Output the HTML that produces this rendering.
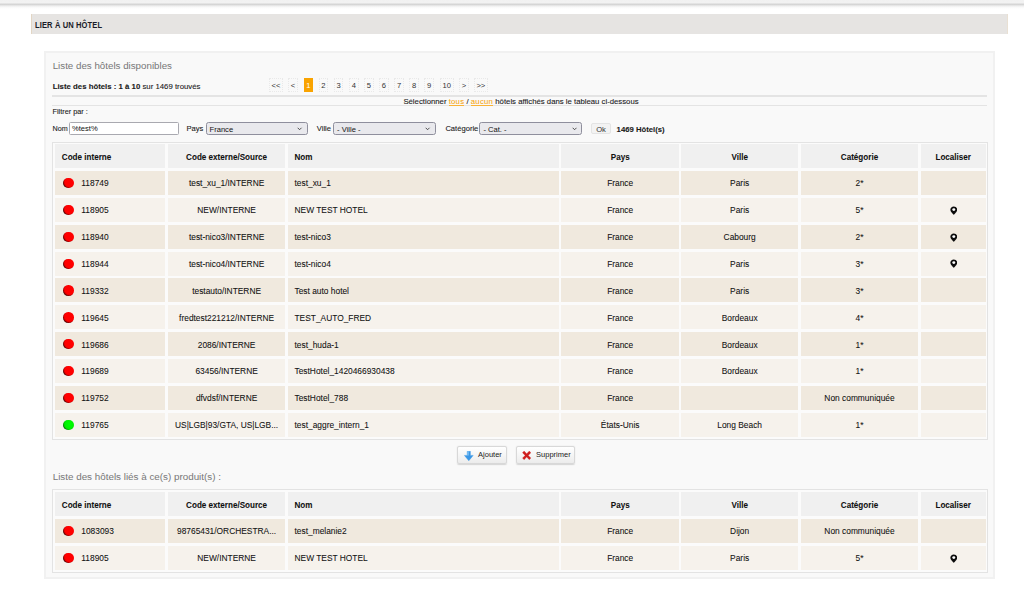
<!DOCTYPE html>
<html><head><meta charset="utf-8"><style>
html,body{margin:0;padding:0;}
body{width:1024px;height:589px;overflow:hidden;background:#fff;position:relative;font-family:"Liberation Sans", sans-serif;color:#222;}
div,span{box-sizing:border-box;}
.abs{position:absolute;}
#topbar{position:absolute;left:0;top:0;width:1024px;height:9px;background:linear-gradient(to bottom,#f1f1f1 0px,#f2f2f2 2.5px,#f4f4f4 3px,#d3d3d3 4px,#d6d6d6 4.6px,#efefef 6px,#fafafa 7.5px,#fff 9px);}
#hdr{position:absolute;left:31px;top:14px;width:977px;height:20.3px;background:#e6e4e2;border-left:1px solid #e3d6c4;border-right:1px solid #e9e0d3;}
#hdr span{position:absolute;left:3.4px;top:4.9px;font-size:9.9px;font-weight:bold;color:#1a1c28;letter-spacing:0.15px;line-height:12px;white-space:nowrap;transform:scaleX(0.765);transform-origin:left center;}
#panel{position:absolute;left:44.3px;top:50.9px;width:950.4px;height:528.5px;background:#f9f9f9;border:2px solid #f1f1f1;}
.title{position:absolute;left:52.7px;font-size:10px;color:#777;white-space:nowrap;line-height:12px;}
.small{position:absolute;font-size:7.6px;color:#1b1b1b;-webkit-text-stroke:0.1px #1b1b1b;white-space:nowrap;line-height:9px;}
.hline{position:absolute;left:52px;width:935px;height:1.3px;background:#e4e4e4;}
.pg{position:absolute;top:77.5px;height:14.7px;border:1px dotted #e9e9e9;padding-top:1px;font-size:7.6px;color:#333;display:flex;align-items:center;justify-content:center;line-height:9px;}
.lnk{color:#f7a30a;-webkit-text-stroke:0.05px #f7a30a;display:inline-block;line-height:7.6px;border-bottom:1px solid #f9b235;letter-spacing:0.25px;}
.pg.cur{background:#f9a300;border-color:#f9a300;color:#fff;}
.inp{position:absolute;background:#fff;border:1px solid #a9a9b0;border-radius:1.5px;font-size:7.6px;line-height:10px;padding-left:3px;display:flex;align-items:center;color:#111;}
.sel{position:absolute;top:121.7px;height:13.1px;background:#e9e9ed;border:1px solid #8f8f9d;border-radius:2.5px;font-size:7.6px;line-height:10px;padding-left:3px;padding-top:2.55px;display:flex;align-items:center;color:#111;}
.chev{position:absolute;right:4.2px;top:4.2px;}
.tb{position:absolute;left:52px;width:935.5px;background:#fbfbfb;border:1px solid #e3e3e3;}
.th,.td{position:absolute;display:flex;align-items:center;white-space:nowrap;font-size:8.4px;line-height:10px;color:#111;-webkit-text-stroke:0.06px #111;}
.t{display:inline-block;transform:translateY(-0.45px) scaleY(1.16);}
.th .t{transform:translateY(0.3px) scaleY(1.14);}
.th{background:#f0f0f0;font-weight:bold;font-size:8.1px;padding-top:1.4px;}
.odd{background:#f0e9de;padding-top:0.8px;}
.even{background:#f6f2ec;padding-top:0.8px;}
.dotr,.dotg{display:inline-block;width:10.4px;height:10.4px;margin-top:-0.6px;margin-left:-0.5px;border-radius:50%;flex:none;}
.dotr{background:radial-gradient(circle at 60% 40%,#ff0000 0%,#ff0000 50%,#dd0000 60%,#500000 73%);}
.dotg{background:radial-gradient(circle at 60% 40%,#00ff00 0%,#00f000 52%,#00c800 64%,#005a00 74%);}
.btn{position:absolute;top:446.4px;height:16.8px;border:1px solid #d8d8d8;border-radius:2px;background:linear-gradient(#fff,#ececec);box-shadow:0 0.5px 1.2px rgba(0,0,0,0.15);font-size:7.5px;color:#222;line-height:10px;}
</style></head><body>
<div id="topbar"></div>
<div id="hdr"><span>LIER À UN HÔTEL</span></div>
<div id="panel"></div>
<div class="title" style="top:59.6px;font-size:9.75px">Liste des hôtels disponibles</div>
<div class="small" style="left:52.7px;top:82px;font-size:7.8px"><b>Liste des hôtels : 1 à 10</b> sur 1469 trouvés</div>
<div class="pg" style="left:269.1px;width:13.699999999999989px">&lt;&lt;</div>
<div class="pg" style="left:288.1px;width:9.699999999999989px">&lt;</div>
<div class="pg cur" style="left:303.7px;width:9.300000000000011px">1</div>
<div class="pg" style="left:318.7px;width:9.600000000000023px">2</div>
<div class="pg" style="left:333.9px;width:9.600000000000023px">3</div>
<div class="pg" style="left:349.1px;width:9.649999999999977px">4</div>
<div class="pg" style="left:364.0px;width:9.75px">5</div>
<div class="pg" style="left:379.1px;width:9.699999999999989px">6</div>
<div class="pg" style="left:394.3px;width:9.399999999999977px">7</div>
<div class="pg" style="left:409.2px;width:9.800000000000011px">8</div>
<div class="pg" style="left:424.2px;width:10.0px">9</div>
<div class="pg" style="left:440.0px;width:13.5px">10</div>
<div class="pg" style="left:459.1px;width:9.649999999999977px">&gt;</div>
<div class="pg" style="left:474.0px;width:13.699999999999989px">&gt;&gt;</div>
<div class="hline" style="top:95.3px"></div>
<div id="sel" class="small" style="left:403.4px;top:96.8px;font-size:7.75px;z-index:2">Sélectionner <span class="lnk">tous</span> / <span class="lnk">aucun</span> hôtels affichés dans le tableau ci-dessous</div>
<div class="hline" style="top:104.8px"></div>
<div class="small" style="left:52.5px;top:106.6px;font-size:7.3px">Filtrer par :</div>
<div class="small" style="left:52.5px;top:124.2px;font-size:7.2px">Nom</div>
<div class="inp" style="left:68.9px;top:122.1px;width:109.8px;height:12.6px;padding-left:2px;padding-top:1.5px">%test%</div>
<div class="small" style="left:186.5px;top:124.45px">Pays</div>
<div class="sel" style="left:205.5px;width:102.3px">France<svg class="chev" width="5.2" height="3.6" viewBox="0 0 10 7"><path d="M1.2 1.5l3.8 3.8 3.8-3.8" stroke="#3a3a3a" stroke-width="1.7" fill="none"/></svg></div>
<div class="small" style="left:316.8px;top:124.45px">Ville</div>
<div class="sel" style="left:333.1px;width:102.7px">- Ville -<svg class="chev" width="5.2" height="3.6" viewBox="0 0 10 7"><path d="M1.2 1.5l3.8 3.8 3.8-3.8" stroke="#3a3a3a" stroke-width="1.7" fill="none"/></svg></div>
<div class="small" style="left:445.4px;top:124.45px">Catégorie</div>
<div class="sel" style="left:479.4px;width:102.5px">- Cat. -<svg class="chev" width="5.2" height="3.6" viewBox="0 0 10 7"><path d="M1.2 1.5l3.8 3.8 3.8-3.8" stroke="#3a3a3a" stroke-width="1.7" fill="none"/></svg></div>
<div class="abs" style="left:591.4px;top:123.3px;width:19.3px;height:10.6px;background:#f3f3f3;border:1px solid #e4e4e4;padding-top:0.8px;border-radius:2px;font-size:7.6px;line-height:9px;display:flex;align-items:center;justify-content:center;color:#333">Ok</div>
<div class="small" style="left:616.6px;top:124.5px;font-weight:bold;font-size:7.73px">1469 Hôtel(s)</div>
<div class="tb" style="top:141.6px;height:298.20000000000005px"></div>
<div class="th" style="left:54.8px;width:110.39999999999999px;top:144.2px;height:24.0px;justify-content:flex-start;padding-left:7px;"><span class="t">Code interne</span></div>
<div class="th" style="left:168.0px;width:117.19999999999999px;top:144.2px;height:24.0px;justify-content:center;"><span class="t">Code externe/Source</span></div>
<div class="th" style="left:287.5px;width:271.5px;top:144.2px;height:24.0px;justify-content:flex-start;padding-left:7px;"><span class="t">Nom</span></div>
<div class="th" style="left:561.4px;width:117.60000000000002px;top:144.2px;height:24.0px;justify-content:center;"><span class="t">Pays</span></div>
<div class="th" style="left:681.0px;width:117.29999999999995px;top:144.2px;height:24.0px;justify-content:center;"><span class="t">Ville</span></div>
<div class="th" style="left:801.0px;width:117.0px;top:144.2px;height:24.0px;justify-content:center;"><span class="t">Catégorie</span></div>
<div class="th" style="left:920.7px;width:65.09999999999991px;top:144.2px;height:24.0px;justify-content:center;"><span class="t">Localiser</span></div>
<div class="td odd" style="left:54.8px;width:110.39999999999999px;top:171.10px;height:24.0px;justify-content:flex-start;padding-left:9.1px;"><span class="dotr"></span><span class="t" style="margin-left:7.5px">118749</span></div>
<div class="td odd" style="left:168.0px;width:117.19999999999999px;top:171.10px;height:24.0px;justify-content:center;"><span class="t">test_xu_1/INTERNE</span></div>
<div class="td odd" style="left:287.5px;width:271.5px;top:171.10px;height:24.0px;justify-content:flex-start;padding-left:7px;"><span class="t">test_xu_1</span></div>
<div class="td odd" style="left:561.4px;width:117.60000000000002px;top:171.10px;height:24.0px;justify-content:center;"><span class="t">France</span></div>
<div class="td odd" style="left:681.0px;width:117.29999999999995px;top:171.10px;height:24.0px;justify-content:center;"><span class="t">Paris</span></div>
<div class="td odd" style="left:801.0px;width:117.0px;top:171.10px;height:24.0px;justify-content:center;"><span class="t">2*</span></div>
<div class="td odd" style="left:920.7px;width:65.09999999999991px;top:171.10px;height:24.0px;justify-content:center;"></div>
<div class="td even" style="left:54.8px;width:110.39999999999999px;top:197.94px;height:24.0px;justify-content:flex-start;padding-left:9.1px;"><span class="dotr"></span><span class="t" style="margin-left:7.5px">118905</span></div>
<div class="td even" style="left:168.0px;width:117.19999999999999px;top:197.94px;height:24.0px;justify-content:center;"><span class="t">NEW/INTERNE</span></div>
<div class="td even" style="left:287.5px;width:271.5px;top:197.94px;height:24.0px;justify-content:flex-start;padding-left:7px;"><span class="t">NEW TEST HOTEL</span></div>
<div class="td even" style="left:561.4px;width:117.60000000000002px;top:197.94px;height:24.0px;justify-content:center;"><span class="t">France</span></div>
<div class="td even" style="left:681.0px;width:117.29999999999995px;top:197.94px;height:24.0px;justify-content:center;"><span class="t">Paris</span></div>
<div class="td even" style="left:801.0px;width:117.0px;top:197.94px;height:24.0px;justify-content:center;"><span class="t">5*</span></div>
<div class="td even" style="left:920.7px;width:65.09999999999991px;top:197.94px;height:24.0px;justify-content:center;"><svg style="margin-top:-0.1px;margin-left:0.9px" width="7.6" height="9.2" viewBox="0 0 14.8 17.6"><path d="M7.4 0.6C3.6 0.6 0.7 3.5 0.7 7.1c0 4 6.7 9.9 6.7 9.9s6.7-5.9 6.7-9.9C14.1 3.5 11.2 0.6 7.4 0.6z" fill="#0c0c0c"/><circle cx="7.4" cy="6.9" r="2.9" fill="#fff"/></svg></div>
<div class="td odd" style="left:54.8px;width:110.39999999999999px;top:224.78px;height:24.0px;justify-content:flex-start;padding-left:9.1px;"><span class="dotr"></span><span class="t" style="margin-left:7.5px">118940</span></div>
<div class="td odd" style="left:168.0px;width:117.19999999999999px;top:224.78px;height:24.0px;justify-content:center;"><span class="t">test-nico3/INTERNE</span></div>
<div class="td odd" style="left:287.5px;width:271.5px;top:224.78px;height:24.0px;justify-content:flex-start;padding-left:7px;"><span class="t">test-nico3</span></div>
<div class="td odd" style="left:561.4px;width:117.60000000000002px;top:224.78px;height:24.0px;justify-content:center;"><span class="t">France</span></div>
<div class="td odd" style="left:681.0px;width:117.29999999999995px;top:224.78px;height:24.0px;justify-content:center;"><span class="t">Cabourg</span></div>
<div class="td odd" style="left:801.0px;width:117.0px;top:224.78px;height:24.0px;justify-content:center;"><span class="t">2*</span></div>
<div class="td odd" style="left:920.7px;width:65.09999999999991px;top:224.78px;height:24.0px;justify-content:center;"><svg style="margin-top:-0.1px;margin-left:0.9px" width="7.6" height="9.2" viewBox="0 0 14.8 17.6"><path d="M7.4 0.6C3.6 0.6 0.7 3.5 0.7 7.1c0 4 6.7 9.9 6.7 9.9s6.7-5.9 6.7-9.9C14.1 3.5 11.2 0.6 7.4 0.6z" fill="#0c0c0c"/><circle cx="7.4" cy="6.9" r="2.9" fill="#fff"/></svg></div>
<div class="td even" style="left:54.8px;width:110.39999999999999px;top:251.62px;height:24.0px;justify-content:flex-start;padding-left:9.1px;"><span class="dotr"></span><span class="t" style="margin-left:7.5px">118944</span></div>
<div class="td even" style="left:168.0px;width:117.19999999999999px;top:251.62px;height:24.0px;justify-content:center;"><span class="t">test-nico4/INTERNE</span></div>
<div class="td even" style="left:287.5px;width:271.5px;top:251.62px;height:24.0px;justify-content:flex-start;padding-left:7px;"><span class="t">test-nico4</span></div>
<div class="td even" style="left:561.4px;width:117.60000000000002px;top:251.62px;height:24.0px;justify-content:center;"><span class="t">France</span></div>
<div class="td even" style="left:681.0px;width:117.29999999999995px;top:251.62px;height:24.0px;justify-content:center;"><span class="t">Paris</span></div>
<div class="td even" style="left:801.0px;width:117.0px;top:251.62px;height:24.0px;justify-content:center;"><span class="t">3*</span></div>
<div class="td even" style="left:920.7px;width:65.09999999999991px;top:251.62px;height:24.0px;justify-content:center;"><svg style="margin-top:-0.1px;margin-left:0.9px" width="7.6" height="9.2" viewBox="0 0 14.8 17.6"><path d="M7.4 0.6C3.6 0.6 0.7 3.5 0.7 7.1c0 4 6.7 9.9 6.7 9.9s6.7-5.9 6.7-9.9C14.1 3.5 11.2 0.6 7.4 0.6z" fill="#0c0c0c"/><circle cx="7.4" cy="6.9" r="2.9" fill="#fff"/></svg></div>
<div class="td odd" style="left:54.8px;width:110.39999999999999px;top:278.46px;height:24.0px;justify-content:flex-start;padding-left:9.1px;"><span class="dotr"></span><span class="t" style="margin-left:7.5px">119332</span></div>
<div class="td odd" style="left:168.0px;width:117.19999999999999px;top:278.46px;height:24.0px;justify-content:center;"><span class="t">testauto/INTERNE</span></div>
<div class="td odd" style="left:287.5px;width:271.5px;top:278.46px;height:24.0px;justify-content:flex-start;padding-left:7px;"><span class="t">Test auto hotel</span></div>
<div class="td odd" style="left:561.4px;width:117.60000000000002px;top:278.46px;height:24.0px;justify-content:center;"><span class="t">France</span></div>
<div class="td odd" style="left:681.0px;width:117.29999999999995px;top:278.46px;height:24.0px;justify-content:center;"><span class="t">Paris</span></div>
<div class="td odd" style="left:801.0px;width:117.0px;top:278.46px;height:24.0px;justify-content:center;"><span class="t">3*</span></div>
<div class="td odd" style="left:920.7px;width:65.09999999999991px;top:278.46px;height:24.0px;justify-content:center;"></div>
<div class="td even" style="left:54.8px;width:110.39999999999999px;top:305.30px;height:24.0px;justify-content:flex-start;padding-left:9.1px;"><span class="dotr"></span><span class="t" style="margin-left:7.5px">119645</span></div>
<div class="td even" style="left:168.0px;width:117.19999999999999px;top:305.30px;height:24.0px;justify-content:center;"><span class="t">fredtest221212/INTERNE</span></div>
<div class="td even" style="left:287.5px;width:271.5px;top:305.30px;height:24.0px;justify-content:flex-start;padding-left:7px;"><span class="t">TEST_AUTO_FRED</span></div>
<div class="td even" style="left:561.4px;width:117.60000000000002px;top:305.30px;height:24.0px;justify-content:center;"><span class="t">France</span></div>
<div class="td even" style="left:681.0px;width:117.29999999999995px;top:305.30px;height:24.0px;justify-content:center;"><span class="t">Bordeaux</span></div>
<div class="td even" style="left:801.0px;width:117.0px;top:305.30px;height:24.0px;justify-content:center;"><span class="t">4*</span></div>
<div class="td even" style="left:920.7px;width:65.09999999999991px;top:305.30px;height:24.0px;justify-content:center;"></div>
<div class="td odd" style="left:54.8px;width:110.39999999999999px;top:332.14px;height:24.0px;justify-content:flex-start;padding-left:9.1px;"><span class="dotr"></span><span class="t" style="margin-left:7.5px">119686</span></div>
<div class="td odd" style="left:168.0px;width:117.19999999999999px;top:332.14px;height:24.0px;justify-content:center;"><span class="t">2086/INTERNE</span></div>
<div class="td odd" style="left:287.5px;width:271.5px;top:332.14px;height:24.0px;justify-content:flex-start;padding-left:7px;"><span class="t">test_huda-1</span></div>
<div class="td odd" style="left:561.4px;width:117.60000000000002px;top:332.14px;height:24.0px;justify-content:center;"><span class="t">France</span></div>
<div class="td odd" style="left:681.0px;width:117.29999999999995px;top:332.14px;height:24.0px;justify-content:center;"><span class="t">Bordeaux</span></div>
<div class="td odd" style="left:801.0px;width:117.0px;top:332.14px;height:24.0px;justify-content:center;"><span class="t">1*</span></div>
<div class="td odd" style="left:920.7px;width:65.09999999999991px;top:332.14px;height:24.0px;justify-content:center;"></div>
<div class="td even" style="left:54.8px;width:110.39999999999999px;top:358.98px;height:24.0px;justify-content:flex-start;padding-left:9.1px;"><span class="dotr"></span><span class="t" style="margin-left:7.5px">119689</span></div>
<div class="td even" style="left:168.0px;width:117.19999999999999px;top:358.98px;height:24.0px;justify-content:center;"><span class="t">63456/INTERNE</span></div>
<div class="td even" style="left:287.5px;width:271.5px;top:358.98px;height:24.0px;justify-content:flex-start;padding-left:7px;"><span class="t">TestHotel_1420466930438</span></div>
<div class="td even" style="left:561.4px;width:117.60000000000002px;top:358.98px;height:24.0px;justify-content:center;"><span class="t">France</span></div>
<div class="td even" style="left:681.0px;width:117.29999999999995px;top:358.98px;height:24.0px;justify-content:center;"><span class="t">Bordeaux</span></div>
<div class="td even" style="left:801.0px;width:117.0px;top:358.98px;height:24.0px;justify-content:center;"><span class="t">1*</span></div>
<div class="td even" style="left:920.7px;width:65.09999999999991px;top:358.98px;height:24.0px;justify-content:center;"></div>
<div class="td odd" style="left:54.8px;width:110.39999999999999px;top:385.82px;height:24.0px;justify-content:flex-start;padding-left:9.1px;"><span class="dotr"></span><span class="t" style="margin-left:7.5px">119752</span></div>
<div class="td odd" style="left:168.0px;width:117.19999999999999px;top:385.82px;height:24.0px;justify-content:center;"><span class="t">dfvdsf/INTERNE</span></div>
<div class="td odd" style="left:287.5px;width:271.5px;top:385.82px;height:24.0px;justify-content:flex-start;padding-left:7px;"><span class="t">TestHotel_788</span></div>
<div class="td odd" style="left:561.4px;width:117.60000000000002px;top:385.82px;height:24.0px;justify-content:center;"><span class="t">France</span></div>
<div class="td odd" style="left:681.0px;width:117.29999999999995px;top:385.82px;height:24.0px;justify-content:center;"></div>
<div class="td odd" style="left:801.0px;width:117.0px;top:385.82px;height:24.0px;justify-content:center;"><span class="t">Non communiquée</span></div>
<div class="td odd" style="left:920.7px;width:65.09999999999991px;top:385.82px;height:24.0px;justify-content:center;"></div>
<div class="td even" style="left:54.8px;width:110.39999999999999px;top:412.66px;height:24.0px;justify-content:flex-start;padding-left:9.1px;"><span class="dotg"></span><span class="t" style="margin-left:7.5px">119765</span></div>
<div class="td even" style="left:168.0px;width:117.19999999999999px;top:412.66px;height:24.0px;justify-content:center;"><span class="t">US|LGB|93/GTA, US|LGB...</span></div>
<div class="td even" style="left:287.5px;width:271.5px;top:412.66px;height:24.0px;justify-content:flex-start;padding-left:7px;"><span class="t">test_aggre_intern_1</span></div>
<div class="td even" style="left:561.4px;width:117.60000000000002px;top:412.66px;height:24.0px;justify-content:center;"><span class="t">États-Unis</span></div>
<div class="td even" style="left:681.0px;width:117.29999999999995px;top:412.66px;height:24.0px;justify-content:center;"><span class="t">Long Beach</span></div>
<div class="td even" style="left:801.0px;width:117.0px;top:412.66px;height:24.0px;justify-content:center;"><span class="t">1*</span></div>
<div class="td even" style="left:920.7px;width:65.09999999999991px;top:412.66px;height:24.0px;justify-content:center;"></div>
<div class="btn" style="left:457.3px;width:49.3px;top:446.1px;height:17.5px"><svg style="position:absolute;left:5.8px;top:4px" width="9.6" height="10" viewBox="0 0 19 20"><path d="M6.3 0.5h6.4v8.3h5.6l-8.8 10.7L0.7 8.8h5.6z" fill="#3a97e6" stroke="#3a97e6" stroke-width="0.8" stroke-linejoin="round"/><path d="M6.3 0.5h3.2v8.3H6.3z" fill="#7cc0f5"/></svg><span style="position:absolute;left:19.8px;top:3px">Ajouter</span></div>
<div class="btn" style="left:516.3px;width:58.4px;top:446.1px;height:17.5px"><svg style="position:absolute;left:4.8px;top:3.8px" width="9.4" height="9" viewBox="0 0 19 18"><path d="M1 3.2l3.2-3.2 5.3 5.3L14.8 0 18 3.2 12.7 8.8 18 14.3l-3.2 3.2-5.3-5.3-5.3 5.3L1 14.3l5.3-5.5z" fill="#cf1f1f" stroke="#cf1f1f" stroke-width="0.6" stroke-linejoin="round"/></svg><span style="position:absolute;left:18.8px;top:3px">Supprimer</span></div>
<div class="title" style="top:471px;font-size:9.83px">Liste des hôtels liés à ce(s) produit(s) :</div>
<div class="tb" style="top:489.0px;height:83.60000000000002px"></div>
<div class="th" style="left:54.8px;width:110.39999999999999px;top:492.1px;height:24.0px;justify-content:flex-start;padding-left:7px;"><span class="t">Code interne</span></div>
<div class="th" style="left:168.0px;width:117.19999999999999px;top:492.1px;height:24.0px;justify-content:center;"><span class="t">Code externe/Source</span></div>
<div class="th" style="left:287.5px;width:271.5px;top:492.1px;height:24.0px;justify-content:flex-start;padding-left:7px;"><span class="t">Nom</span></div>
<div class="th" style="left:561.4px;width:117.60000000000002px;top:492.1px;height:24.0px;justify-content:center;"><span class="t">Pays</span></div>
<div class="th" style="left:681.0px;width:117.29999999999995px;top:492.1px;height:24.0px;justify-content:center;"><span class="t">Ville</span></div>
<div class="th" style="left:801.0px;width:117.0px;top:492.1px;height:24.0px;justify-content:center;"><span class="t">Catégorie</span></div>
<div class="th" style="left:920.7px;width:65.09999999999991px;top:492.1px;height:24.0px;justify-content:center;"><span class="t">Localiser</span></div>
<div class="td odd" style="left:54.8px;width:110.39999999999999px;top:519.00px;height:24.0px;justify-content:flex-start;padding-left:9.1px;"><span class="dotr"></span><span class="t" style="margin-left:7.5px">1083093</span></div>
<div class="td odd" style="left:168.0px;width:117.19999999999999px;top:519.00px;height:24.0px;justify-content:center;"><span class="t">98765431/ORCHESTRA...</span></div>
<div class="td odd" style="left:287.5px;width:271.5px;top:519.00px;height:24.0px;justify-content:flex-start;padding-left:7px;"><span class="t">test_melanie2</span></div>
<div class="td odd" style="left:561.4px;width:117.60000000000002px;top:519.00px;height:24.0px;justify-content:center;"><span class="t">France</span></div>
<div class="td odd" style="left:681.0px;width:117.29999999999995px;top:519.00px;height:24.0px;justify-content:center;"><span class="t">Dijon</span></div>
<div class="td odd" style="left:801.0px;width:117.0px;top:519.00px;height:24.0px;justify-content:center;"><span class="t">Non communiquée</span></div>
<div class="td odd" style="left:920.7px;width:65.09999999999991px;top:519.00px;height:24.0px;justify-content:center;"></div>
<div class="td even" style="left:54.8px;width:110.39999999999999px;top:545.84px;height:24.0px;justify-content:flex-start;padding-left:9.1px;"><span class="dotr"></span><span class="t" style="margin-left:7.5px">118905</span></div>
<div class="td even" style="left:168.0px;width:117.19999999999999px;top:545.84px;height:24.0px;justify-content:center;"><span class="t">NEW/INTERNE</span></div>
<div class="td even" style="left:287.5px;width:271.5px;top:545.84px;height:24.0px;justify-content:flex-start;padding-left:7px;"><span class="t">NEW TEST HOTEL</span></div>
<div class="td even" style="left:561.4px;width:117.60000000000002px;top:545.84px;height:24.0px;justify-content:center;"><span class="t">France</span></div>
<div class="td even" style="left:681.0px;width:117.29999999999995px;top:545.84px;height:24.0px;justify-content:center;"><span class="t">Paris</span></div>
<div class="td even" style="left:801.0px;width:117.0px;top:545.84px;height:24.0px;justify-content:center;"><span class="t">5*</span></div>
<div class="td even" style="left:920.7px;width:65.09999999999991px;top:545.84px;height:24.0px;justify-content:center;"><svg style="margin-top:-0.1px;margin-left:0.9px" width="7.6" height="9.2" viewBox="0 0 14.8 17.6"><path d="M7.4 0.6C3.6 0.6 0.7 3.5 0.7 7.1c0 4 6.7 9.9 6.7 9.9s6.7-5.9 6.7-9.9C14.1 3.5 11.2 0.6 7.4 0.6z" fill="#0c0c0c"/><circle cx="7.4" cy="6.9" r="2.9" fill="#fff"/></svg></div>
</body></html>
